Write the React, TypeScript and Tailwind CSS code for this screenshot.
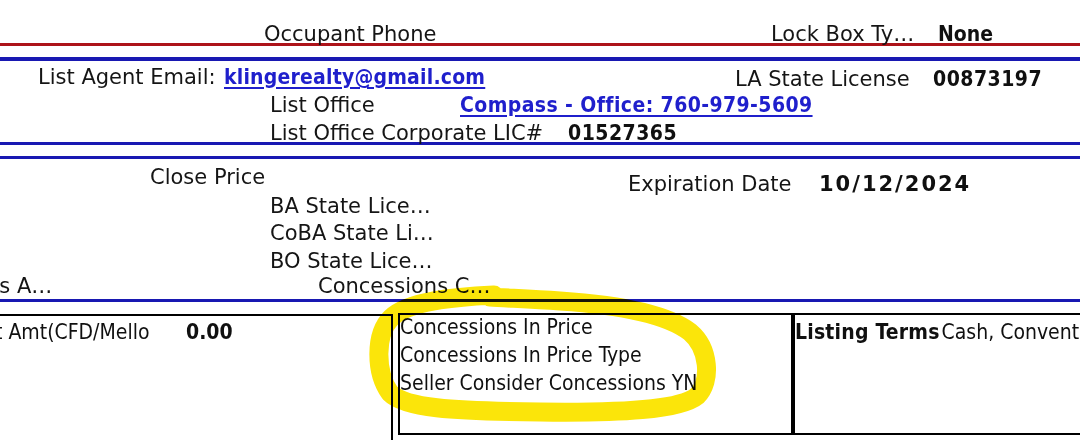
import React from "react";

const L = "font-['DejaVu_Sans',sans-serif] text-[21px] leading-[28px] text-[#151515] whitespace-nowrap";
const C = "font-['DejaVu_Sans_Condensed','DejaVu_Sans',sans-serif] text-[21px] leading-[28px] text-[#101010] whitespace-nowrap";
const CB = C + " font-bold";
const WB = "font-['DejaVu_Sans',sans-serif] text-[21px] leading-[28px] font-bold tracking-[2px] text-[#101010] whitespace-nowrap";
const LINK =
  "font-['DejaVu_Sans_Condensed','DejaVu_Sans',sans-serif] text-[21px] leading-[28px] font-bold text-[#1f1fcc] underline decoration-2 underline-offset-[3px] whitespace-nowrap";

export default function App() {
  return (
    <div className="relative w-[1080px] h-[440px] overflow-hidden bg-white">
      {/* Row 1 */}
      <div className="h-[43px] pt-[20px] flex">
        <div className="w-[771px] shrink-0 pl-[264px]">
          <span className={L}>Occupant Phone</span>
        </div>
        <div className="w-[167px] shrink-0">
          <span className={L}>Lock Box Ty…</span>
        </div>
        <span className={CB}>None</span>
      </div>
      <div className="h-[3px] bg-[#ad1319]" />
      <div className="mt-[11px] h-[4px] bg-[#1818b2]" />

      {/* Section 2 */}
      <div className="h-[81px] pt-[2px] flex flex-col">
        <div className="h-[28px] flex">
          <div className="w-[224px] shrink-0 pl-[38px]">
            <span className={L}>List Agent Email:</span>
          </div>
          <div className="w-[511px] shrink-0">
            <span className={LINK + " tracking-[0.2px]"}>klingerealty@gmail.com</span>
          </div>
          <div className="w-[198px] shrink-0 pt-[2px]">
            <span className={L}>LA State License</span>
          </div>
          <div className="pt-[2px]">
            <span className={CB + " tracking-[0.5px]"}>00873197</span>
          </div>
        </div>
        <div className="h-[28px] flex">
          <div className="w-[460px] shrink-0 pl-[270px]">
            <span className={L}>List Office</span>
          </div>
          <span className={LINK + " tracking-[0.4px]"}>Compass - Office: 760-979-5609</span>
        </div>
        <div className="h-[28px] flex">
          <div className="w-[568px] shrink-0 pl-[270px]">
            <span className={L}>List Office Corporate LIC#</span>
          </div>
          <span className={CB + " tracking-[0.5px]"}>01527365</span>
        </div>
      </div>
      <div className="h-[3px] bg-[#1818b2]" />
      <div className="mt-[11px] h-[3px] bg-[#1818b2]" />

      {/* Section 3 */}
      <div className="h-[140px] pt-[4px] flex flex-col">
        <div className="h-[29px] flex">
          <div className="w-[628px] shrink-0 pl-[150px]">
            <span className={L}>Close Price</span>
          </div>
          <div className="w-[191px] shrink-0 pt-[7px]">
            <span className={L}>Expiration Date</span>
          </div>
          <div className="pt-[7px]">
            <span className={WB}>10/12/2024</span>
          </div>
        </div>
        <div className="h-[27px] pl-[270px]">
          <span className={L}>BA State Lice…</span>
        </div>
        <div className="h-[28px] pl-[270px]">
          <span className={L}>CoBA State Li…</span>
        </div>
        <div className="h-[25px] pl-[270px]">
          <span className={L}>BO State Lice…</span>
        </div>
        <div className="h-[28px] flex">
          <div className="w-[318px] shrink-0 -ml-[14px]">
            <span className={L}>ns A…</span>
          </div>
          <div className="ml-[14px]">
            <span className={L}>Concessions C…</span>
          </div>
        </div>
      </div>
      <div className="h-[3px] bg-[#1818b2]" />

      {/* Boxes */}
      <div className="mt-[12px] flex items-start">
        <div className="w-[398px] shrink-0 h-[125px] flex">
          <div className="w-[395px] shrink-0 -ml-[2px] h-[140px] border-2 border-black pt-[2px] flex overflow-hidden">
            <div className="w-[191px] shrink-0 -ml-[5px]">
              <span className={C}>t Amt(CFD/Mello</span>
            </div>
            <span className={CB}>0.00</span>
          </div>
        </div>
        <div className="w-[395px] shrink-0 h-[122px] -mt-[1px] border-2 border-black flex flex-col">
          <div className={C + " -mt-[2px] leading-[26.5px]"}>Concessions In Price</div>
          <div className={C + " leading-[26.5px]"}>Concessions In Price Type</div>
          <div className={C + " leading-[26.5px]"}>Seller Consider Concessions YN</div>
        </div>
        <div className="w-[300px] shrink-0 h-[122px] -mt-[1px] border-2 border-r-0 border-black pt-[3px] flex">
          <span className={CB + " tracking-[0.2px]"}>Listing Terms</span>
          <span className={C + " ml-[2px]"}>Cash, Conventional, FHA, VA</span>
        </div>
      </div>

      {/* yellow hand-drawn highlight */}
      <svg
        className="absolute left-0 top-0 pointer-events-none mix-blend-multiply"
        width="1080"
        height="440"
        viewBox="0 0 1080 440"
      >
        <path
          d="M 494 295 C 455 297, 408 301, 391 318 C 375 334, 375 372, 390 393 C 405 408, 450 411, 540 412 C 620 413, 680 410, 697 396 C 712 381, 709 348, 690 332 C 668 315, 620 305, 560 301 C 530 299, 505 298, 490 297"
          fill="none"
          stroke="#fbe50a"
          strokeWidth="19"
          strokeLinecap="round"
          strokeLinejoin="round"
        />
      </svg>
    </div>
  );
}
